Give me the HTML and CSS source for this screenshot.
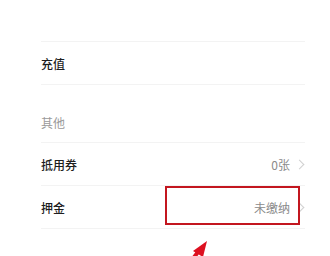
FILE: index.html
```html
<!DOCTYPE html>
<html lang="zh-CN">
  <head>
    <meta charset="UTF-8" />
    <meta name="viewport" content="width=device-width, initial-scale=1.0" />
    <title>钱包</title>
    <link rel="stylesheet" href="styles.css">
  </head>
  <body>
    <div class="top-space"></div>

    <!-- 充值 -->
    <ul class="menu-list">
      <li class="menu-item">
        <span class="menu-label">充值</span>
      </li>
    </ul>

    <!-- 其他 -->
    <div class="group-title">其他</div>
    <ul class="menu-list">
      <li class="menu-item">
        <span class="menu-label">抵用券</span>
        <span class="menu-value">0张</span>
        <span class="chevron"></span>
      </li>
      <li class="menu-item deposit">
        <span class="menu-label">押金</span>
        <span class="menu-value">未缴纳</span>
        <span class="chevron"></span>
        <div class="mark-box"></div>
      </li>
    </ul>

    <!-- 标注箭头 -->
    <svg class="mark-arrow" width="30" height="24" viewBox="0 0 30 24">
      <path d="M13 16 L7 24" stroke="#dd1020" stroke-width="4" fill="none" />
      <polygon points="22,5 8,15 18,21" fill="#dd1020" />
    </svg>
  </body>
</html>
```

FILE: styles.css
```css
body {
  margin: 0;
  padding: 0;
  background: #fff;
  font-family: "Noto Sans CJK SC", "Noto Sans", sans-serif;
  font-size: 12px;
  color: #1e1e1e;
  position: relative;
  height: 256px;
  overflow: hidden;
}

.top-space {
  height: 41px;
  margin: 0 25px 0 41px;
  border-bottom: 1px solid #f3f3f3;
}

.menu-list {
  list-style: none;
  margin: 0;
  padding: 0 25px 0 41px;
}

.menu-item {
  display: flex;
  align-items: center;
  height: 42px;
  border-bottom: 1px solid #f3f3f3;
  position: relative;
}

.menu-label {
  flex: 1;
  font-weight: 500;
}

.menu-value {
  color: #8a8a8a;
}

.chevron {
  width: 6px;
  height: 6px;
  border-top: 1px solid #d0d0d0;
  border-right: 1px solid #d0d0d0;
  transform: rotate(45deg);
  margin: 0 2px 0 6px;
}

.group-title {
  color: #9a9a9a;
  height: 46px;
  margin: 0 25px 0 41px;
  padding-bottom: 11px;
  display: flex;
  align-items: flex-end;
  border-bottom: 1px solid #f3f3f3;
}

/* 빨간 표시 박스 */
.mark-box {
  position: absolute;
  left: 124px;
  top: 0;
  width: 131px;
  height: 35px;
  border: 2.5px solid #c3161f;
}

.mark-arrow {
  position: absolute;
  left: 185px;
  top: 236px;
}
```
